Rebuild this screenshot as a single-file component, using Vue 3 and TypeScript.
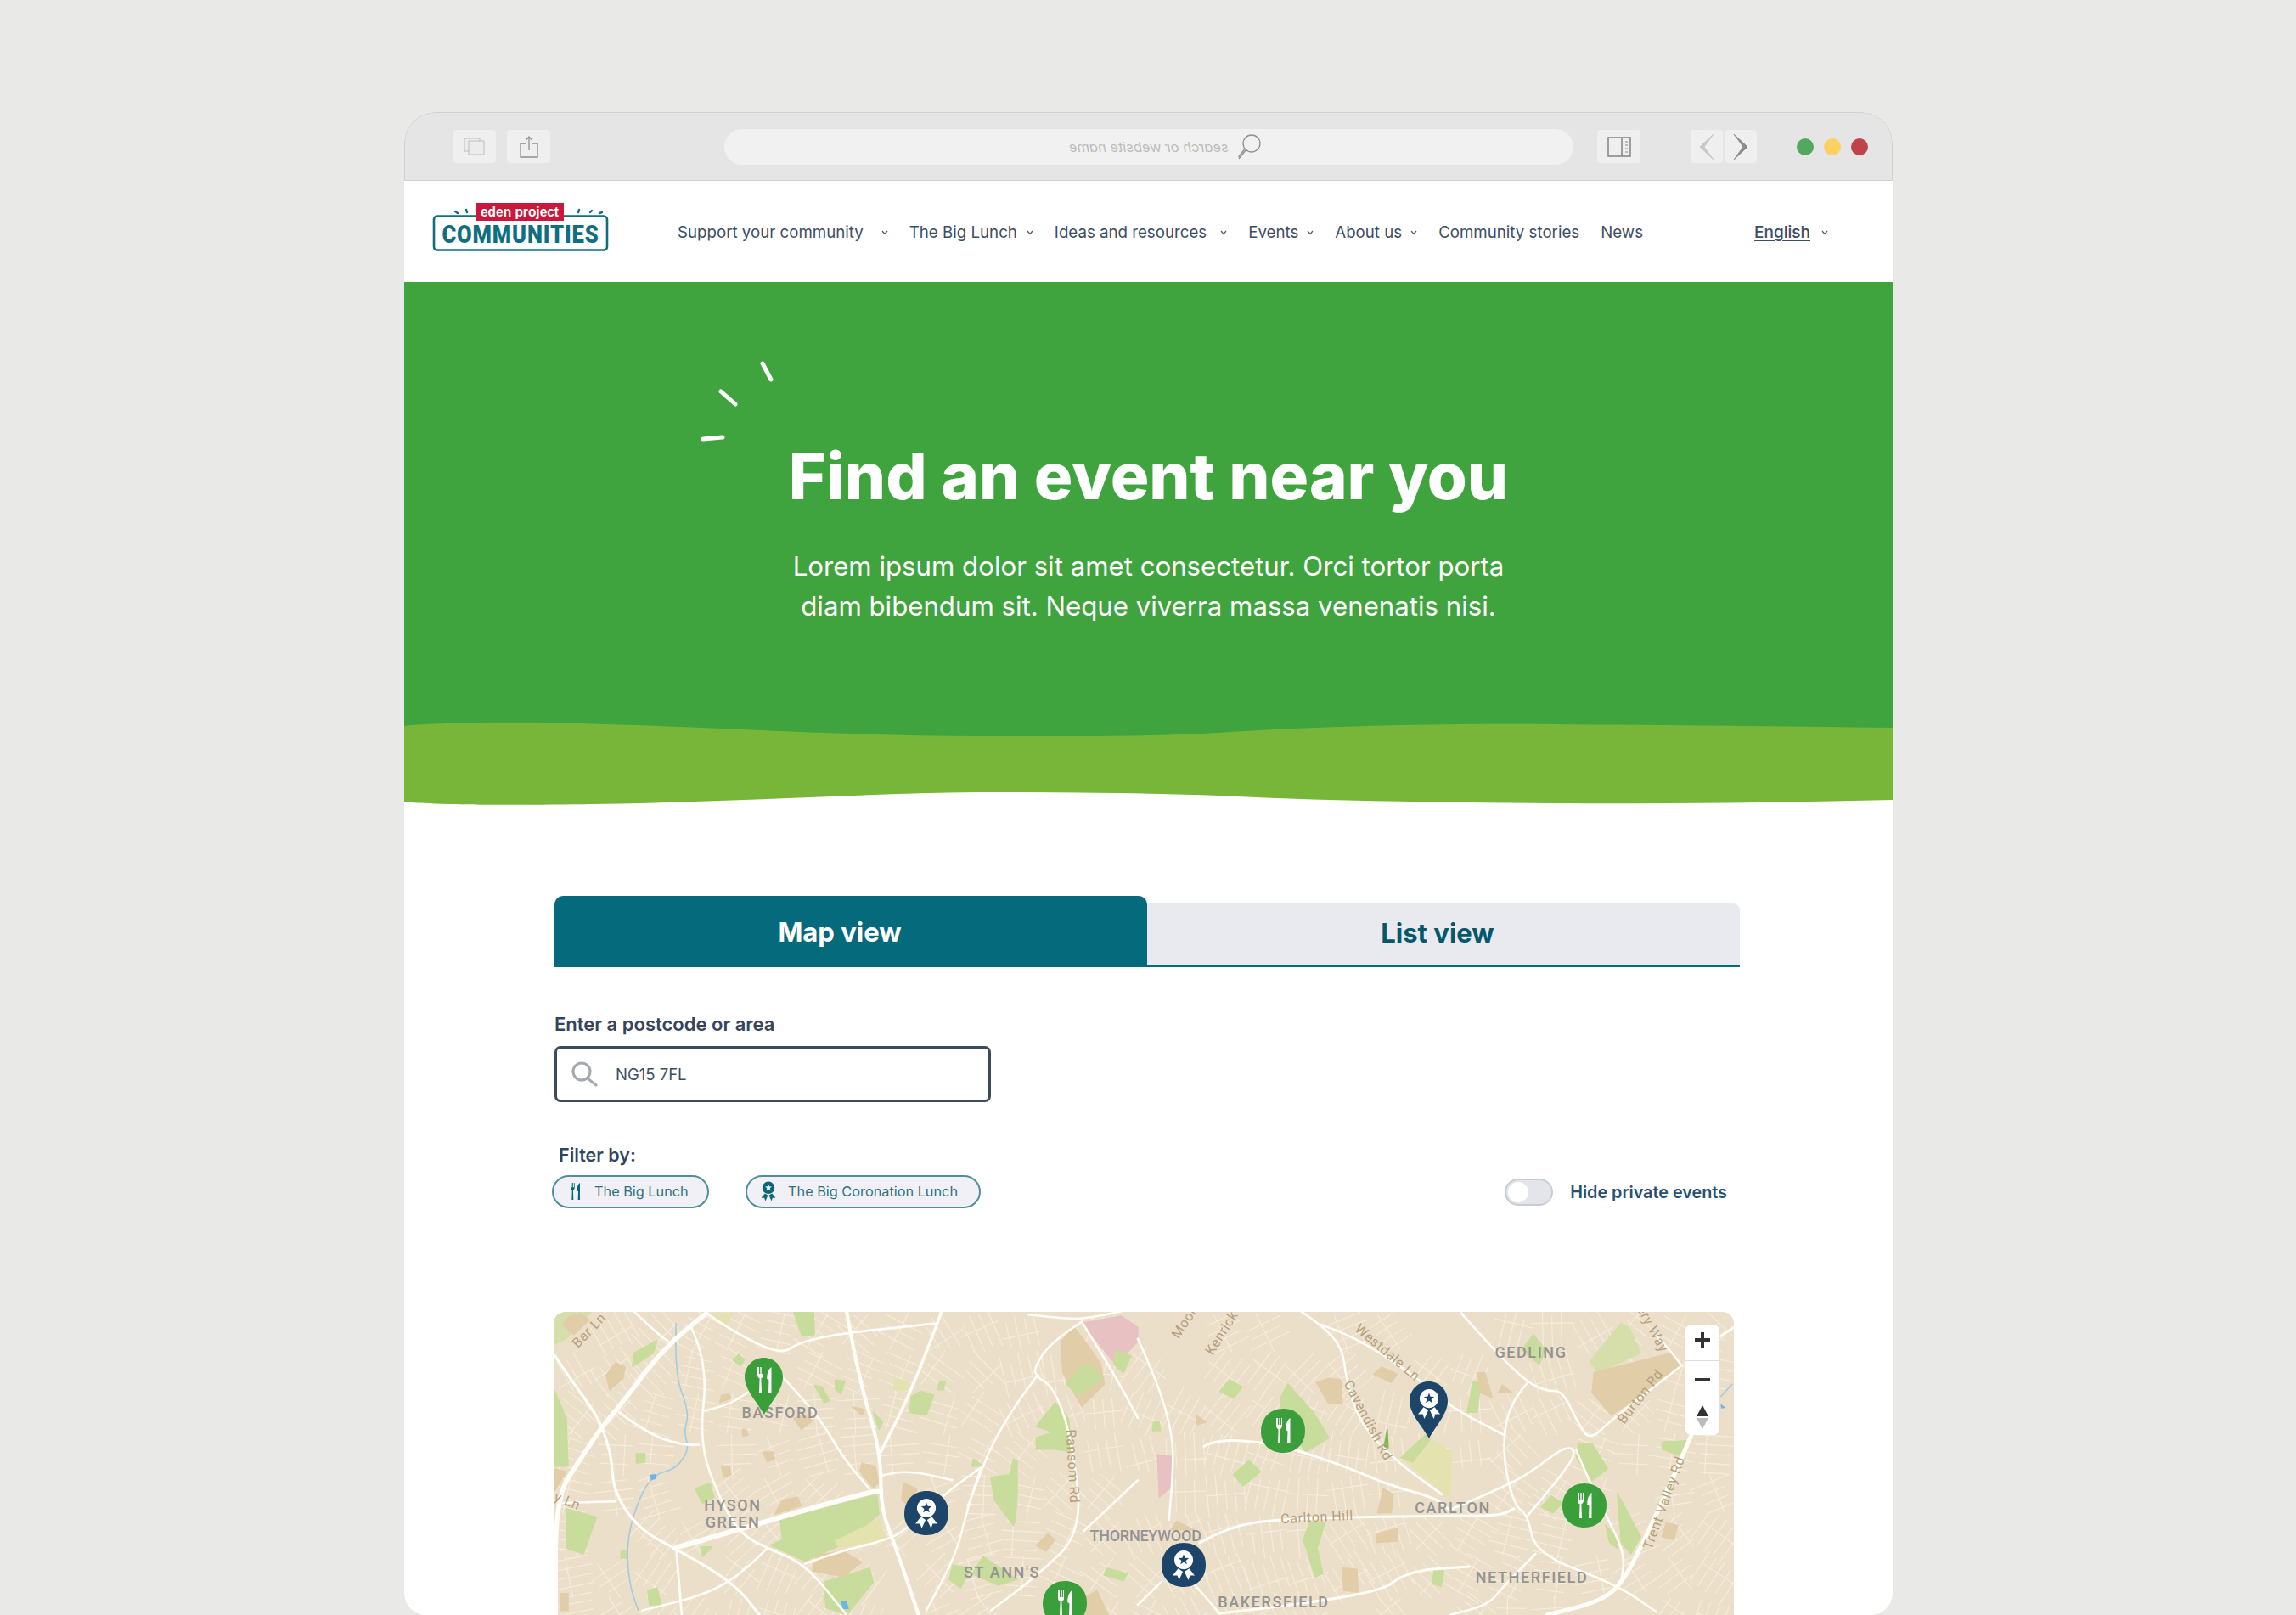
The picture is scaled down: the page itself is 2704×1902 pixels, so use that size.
<script setup lang="ts">
type Shape = { d: string; fill: string }
type Road = { d: string; w: number }

const navItems = [
  { label: 'Support your community', gap: 21, chevron: true },
  { label: 'The Big Lunch', gap: 11, chevron: true },
  { label: 'Ideas and resources', gap: 16, chevron: true },
  { label: 'Events', gap: 10, chevron: true },
  { label: 'About us', gap: 10, chevron: true },
  { label: 'Community stories', gap: 0, chevron: false },
  { label: 'News', gap: 0, chevron: false },
]

const L = (x: number, y: number): [number, number] => [640 + x / 2.24, 1530 + y / 3]
const R = (x: number, y: number): [number, number] => [1340 + x / 2.178, 1530 + y / 3]
type Conv = typeof L

function parse(s: string, c: Conv): [number, number][] {
  return s.trim().split(/\s+/).map((p) => {
    const [x, y] = p.split(',').map(Number)
    return c(x, y)
  })
}
const f = (n: number) => n.toFixed(1)
function openPath(s: string, c: Conv): string {
  const p = parse(s, c)
  let d = `M${f(p[0][0])} ${f(p[0][1])}`
  for (let i = 1; i < p.length - 1; i++) {
    const mx = (p[i][0] + p[i + 1][0]) / 2
    const my = (p[i][1] + p[i + 1][1]) / 2
    d += `Q${f(p[i][0])} ${f(p[i][1])} ${f(mx)} ${f(my)}`
  }
  const e = p[p.length - 1]
  return d + `L${f(e[0])} ${f(e[1])}`
}
function polyPath(s: string, c: Conv): string {
  const p = parse(s, c)
  return 'M' + p.map((q) => `${f(q[0])} ${f(q[1])}`).join('L') + 'Z'
}

const GREEN = '#c8dc9c'
const TAN = '#e1cda8'
const PINK = '#e8c2c2'
const PALE = '#e4e3b0'
const OLIVE = '#d6dfa9'

const shapesL: [string, string][] = [
  ['28,60 28,160 60,140 125,45 60,45', OLIVE],
  ['70,60 50,90 80,125 120,75 100,50', TAN],
  ['300,145 240,190 235,238 290,190', GREEN],
  ['190,225 165,270 175,320 210,280 215,240', TAN],
  ['660,45 682,130 715,125 712,45', GREEN],
  ['445,50 478,98 500,50', PALE],
  ['515,195 500,215 520,235 530,215', GREEN],
  ['28,320 28,590 65,590 60,420', GREEN],
  ['28,600 28,680 60,610', TAN],
  ['715,305 740,365 755,360 735,310', GREEN],
  ['770,285 770,320 785,335 795,290', GREEN],
  ['970,345 965,400 1010,410 1030,340 995,325', GREEN],
  ['925,280 925,320 960,320 960,290', PALE],
  ['1045,290 1040,320 1055,320 1060,290', GREEN],
  ['625,780 630,850 600,870 690,925 800,860 885,760 880,690', GREEN],
  ['770,855 780,880 905,845 885,780', PALE],
  ['1350,365 1300,450 1345,470 1300,490 1300,530 1350,530 1395,540 1385,420', GREEN],
  ['1240,565 1230,620 1180,630 1190,710 1240,800 1245,780 1250,690 1250,570', GREEN],
  ['1420,85 1510,230 1568,150 1568,100 1525,60', PINK],
  ['1400,100 1365,150 1370,260 1420,380 1480,300 1470,230 1440,170', TAN],
  ['1420,235 1380,300 1410,340 1475,280 1450,240', GREEN],
  ['1510,180 1505,230 1530,260 1550,200', GREEN],
  ['400,670 440,650 450,700 420,720', GREEN],
  ['630,710 610,760 680,730 670,700', TAN],
  ['840,580 835,610 870,665 885,650 875,590', TAN],
  ['245,545 245,580 268,575 268,545', GREEN],
  ['60,740 60,880 105,900 140,770', GREEN],
  ['205,890 205,915 220,915 220,890', GREEN],
  ['415,875 420,910 445,875', GREEN],
  ['275,1030 280,1080 310,1080 300,1020', GREEN],
  ['740,1000 745,1090 800,1116 870,1000 860,950', GREEN],
  ['720,905 710,960 790,980 840,930 790,890', TAN],
  ['1080,940 1070,990 1100,1020 1130,950', GREEN],
  ['1160,910 1130,970 1200,1010 1250,990', GREEN],
  ['1330,830 1300,870 1325,890 1350,850', TAN],
  ['1485,950 1480,975 1530,995 1540,970', GREEN],
  ['1420,1060 1420,1116 1490,1116 1460,1030', TAN],
  ['950,650 945,710 975,740 985,670', TAN],
  ['470,340 465,365 495,350 490,335', TAN],
  ['580,540 590,575 610,565 605,540', TAN],
  ['470,590 475,630 495,620 490,590', TAN],
  ['525,460 525,485 540,480 535,460', TAN],
  ['660,420 680,460 710,430 690,410', TAN],
  ['815,380 840,410 848,390', TAN],
  ['870,400 885,460 895,435', GREEN],
  ['1135,565 1130,590 1158,590', GREEN],
  ['45,1040 45,1100 65,1100 65,1040', TAN],
]
const shapesR: [string, string][] = [
  ['1240,85 1160,220 1180,260 1290,190 1260,100', OLIVE],
  ['1370,190 1170,260 1165,330 1215,410 1395,240', TAN],
  ['385,300 365,350 370,400 430,540 490,490 450,400', GREEN],
  ['235,285 210,325 245,350 268,310', GREEN],
  ['285,570 245,620 270,660 315,610', GREEN],
  ['50,550 55,700 90,660 85,555', PINK],
  ['745,490 680,560 710,600 800,700 805,540', PALE],
  ['745,470 675,560 705,575 750,495', GREEN],
  ['1130,510 1125,560 1165,640 1205,600 1165,510', GREEN],
  ['1230,685 1240,860 1265,900 1290,840', GREEN],
  ['1200,800 1210,860 1230,880 1225,830', GREEN],
  ['1060,695 1035,735 1065,755 1090,720', GREEN],
  ['1345,505 1345,530 1395,555 1410,500', GREEN],
  ['440,790 425,850 455,980 475,970 460,880 480,790', GREEN],
  ['760,960 755,1005 778,1015 785,960', GREEN],
  ['490,280 458,295 490,370 525,370 520,285', TAN],
  ['625,240 605,265 650,295 665,265', TAN],
  ['630,670 615,755 650,755 655,690', TAN],
  ['665,810 612,830 612,860 665,855', TAN],
  ['525,950 528,1030 565,1035 562,955', TAN],
  ['1355,790 1345,840 1375,850 1385,800', TAN],
  ['1015,125 985,180 1030,230 1045,180', GREEN],
  ['860,290 845,400 870,400 880,300', GREEN],
  ['870,260 880,330 910,350 890,260', TAN],
  ['935,305 925,330 960,330', TAN],
  ['640,460 632,520 642,525', '#7fb84e'],
  ['40,435 38,465 58,465 55,435', GREEN],
  ['100,785 85,815 145,815', TAN],
  ['150,410 150,445 175,435', TAN],
]

const shapes: Shape[] = [
  ...shapesL.map(([s, c]) => ({ d: polyPath(s, L), fill: c })),
  ...shapesR.map(([s, c]) => ({ d: polyPath(s, R), fill: c })),
]

const roadsL: [string, number][] = [
  ['430,50 330,150 200,380 155,450 100,560 32,700 32,1116', 5.5],
  ['30,200 70,280 125,380 155,450 180,560 185,680 250,810 345,880 450,960 520,1030 570,1116', 3.2],
  ['345,880 510,815 860,680 890,680', 6],
  ['800,45 830,270 890,540 890,740 930,880 990,1116', 4.2],
  ['1050,45 980,300 890,540', 3.6],
  ['390,100 435,230 410,510 470,720 520,830 590,880 690,935 800,1116', 2.6],
  ['590,880 540,950 440,1040 260,1100', 2.6],
  ['690,935 770,895 910,850 960,810 1075,670 1155,595', 2.6],
  ['890,625 950,600 1080,640', 2.6],
  ['430,50 610,215 690,135 1040,85', 2.8],
  ['620,260 720,400 790,560 860,670', 2.6],
  ['200,400 280,480 370,515 410,515', 2.8],
  ['420,395 480,380 545,325', 2.4],
  ['1155,595 1120,730 1090,900 1010,1100', 2.6],
  ['1300,275 1200,450 1120,730', 2.6],
  ['1420,80 1340,150 1295,240 1300,275 1345,310 1390,470 1425,820 1300,980 1180,1100', 2.6],
  ['1425,820 1568,640', 2.6],
  ['1280,55 1370,68 1430,70 1568,30', 2.6],
  ['1420,80 1500,250 1568,420', 2.6],
  ['40,720 190,715', 2.4],
  ['350,880 365,1116', 2.8],
  ['240,45 300,120 330,150', 2.4],
]
const roadsR: [string, number][] = [
  ['0,140 50,290 90,480 90,620 80,780', 2.6],
  ['420,45 470,90 525,170 535,290 570,440 660,570 780,690', 2.6],
  ['470,90 555,130 720,280 800,380 940,480', 2.6],
  ['830,50 920,190 1000,295 1050,325 1090,325 1130,440 1160,500 1220,420 1395,235', 2.6],
  ['1000,295 950,370 935,550 965,730 1000,760 1020,900 1230,1010 1330,1105', 2.6],
  ['170,520 200,495 320,505 400,530 530,590 650,660 760,700 800,745', 3],
  ['160,860 230,805 370,775 780,765 930,765 965,740', 3],
  ['800,745 860,710 950,655 1010,610 1095,520 1125,535 1100,600 1000,765', 2.6],
  ['1125,535 1160,650 1200,760 1250,900 1240,1000', 2.6],
  ['1420,480 1380,610 1300,850 1240,1010 1180,1070 1050,1116', 5],
  ['210,1110 610,1050 690,960 850,945', 3],
  ['1020,900 940,1010 900,1080 800,1116', 2.6],
  ['60,1000 0,1080', 2.6],
  ['140,1000 210,1110', 2.6],
  ['1495,130 1530,100', 2.6],
  ['1395,235 1365,180 1330,130', 2.4],
]
const roads: Road[] = [
  ...roadsL.map(([s, w]) => ({ d: openPath(s, L), w })),
  ...roadsR.map(([s, w]) => ({ d: openPath(s, R), w })),
]

const water = [
  openPath('350,85 345,260 385,400 370,470 385,530 350,600 290,620 250,710 220,850 225,1000 250,1100', L),
  openPath('1495,345 1525,300', R),
]
const ponds = [
  polyPath('280,620 284,640 296,636 298,618', L),
  polyPath('785,1068 790,1095 806,1095 800,1066', L),
  polyPath('1495,370 1496,386 1508,384', R),
]

// Fine street texture: short parallel streets whose direction drifts across the map
function streets(): string {
  let seed = 4711
  const rnd = () => {
    seed = (seed * 16807) % 2147483647
    return seed / 2147483647
  }
  let d = ''
  const size = 48
  for (let y = 1545; y < 1902; y += size) {
    for (let x = 652; x < 2042; x += size) {
      const skip = rnd()
      const a = 0.5 + 1.1 * Math.sin(x / 190) + 0.8 * Math.cos(y / 120) + rnd() * 0.5
      if (skip < 0.14) continue
      const ca = Math.cos(a)
      const sa = Math.sin(a)
      const cx = x + size / 2
      const cy = y + size / 2
      const n = 3 + Math.floor(rnd() * 3)
      for (let i = 0; i < n; i++) {
        const off = (i - (n - 1) / 2) * 11
        const len = 14 + rnd() * 12
        const x1 = cx - sa * off - ca * len
        const y1 = cy + ca * off - sa * len
        const x2 = cx - sa * off + ca * len
        const y2 = cy + ca * off + sa * len
        d += `M${f(x1)} ${f(y1)}L${f(x2)} ${f(y2)}`
      }
      const s = (rnd() - 0.5) * 24
      d += `M${f(cx + ca * s - sa * 24)} ${f(cy + sa * s + ca * 24)}L${f(cx + ca * s + sa * 24)} ${f(cy + sa * s - ca * 24)}`
    }
  }
  return d
}
const streetPath = streets()

const places: { t: string; x: number; y: number; len?: number }[] = [
  { t: 'BASFORD', x: 919, y: 1670 },
  { t: 'HYSON', x: 863, y: 1779 },
  { t: 'GREEN', x: 863, y: 1799 },
  { t: "ST ANN'S", x: 1180, y: 1858 },
  { t: 'THORNEYWOOD', x: 1350, y: 1815, len: 133 },
  { t: 'GEDLING', x: 1803, y: 1599 },
  { t: 'CARLTON', x: 1711, y: 1782 },
  { t: 'NETHERFIELD', x: 1804, y: 1864 },
  { t: 'BAKERSFIELD', x: 1500, y: 1893 },
]
const roadLabels = [
  { t: 'Bar Ln', x: 694, y: 1567, r: -46 },
  { t: 'Ransom Rd', x: 1263, y: 1727, r: 87 },
  { t: 'y Ln', x: 668, y: 1768, r: 22 },
  { t: 'Moor', x: 1395, y: 1558, r: -56 },
  { t: 'Kenrick', x: 1439, y: 1570, r: -58 },
  { t: 'Westdale Ln', x: 1634, y: 1593, r: 40 },
  { t: 'Cavendish Rd', x: 1611, y: 1673, r: 62 },
  { t: 'Carlton Hill', x: 1551, y: 1787, r: -3 },
  { t: 'Burton Rd', x: 1932, y: 1645, r: -52 },
  { t: 'Trent Valley Rd', x: 1960, y: 1770, r: -70 },
  { t: 'ery Way', x: 1946, y: 1565, r: 62 },
]

const pins = [
  { kind: 'pin', icon: 'fork', fill: '#3a9f3a', x: 877, y: 1599 },
  { kind: 'blob', icon: 'rosette', fill: '#1d456a', x: 1065, y: 1756 },
  { kind: 'blob', icon: 'fork', fill: '#3a9f3a', x: 1228, y: 1862 },
  { kind: 'pin', icon: 'rosette', fill: '#1d456a', x: 1660, y: 1627 },
  { kind: 'blob', icon: 'fork', fill: '#3a9f3a', x: 1485, y: 1659 },
  { kind: 'blob', icon: 'fork', fill: '#3a9f3a', x: 1840, y: 1747 },
  { kind: 'blob', icon: 'rosette', fill: '#1d456a', x: 1368, y: 1817 },
]
const PIN_D = 'M22.5 0C35 0 45 10 45 23C45 38 30 54 23 67C16 54 0 38 0 23C0 10 10 0 22.5 0Z'
const BLOB_D = 'M26 0C42 0 52 11 52 26C52 41 42 52 26 52C11 52 0 42 0 27C0 11 11 0 26 0Z'
</script>

<template>
  <div class="page">
    <div class="window">
      <header class="toolbar">
        <div class="tool-btn first">
          <svg width="25" height="21" viewBox="0 0 25 21" fill="#ececec" stroke="#bdbdbd" stroke-width="1">
            <rect x="1" y="1" width="18" height="15" />
            <rect x="6" y="4" width="18" height="16" />
          </svg>
        </div>
        <div class="tool-btn second">
          <svg width="22" height="26" viewBox="0 0 22 26" fill="none" stroke="#8f8f8f" stroke-width="1.3">
            <path d="M7 9H1V25H21V9H15" />
            <path d="M11 17V1M7.5 5L11 1L14.5 5" />
          </svg>
        </div>
        <div class="address">
          <span class="mirror">search or website name</span>
          <svg class="glass" width="28" height="30" viewBox="0 0 28 30" fill="none" stroke="#8f8f8f" stroke-width="1.3">
            <circle cx="16" cy="11" r="10" />
            <path d="M9 19L1 29M7.5 18L0.5 27" />
          </svg>
        </div>
        <div class="tool-btn sidebar">
          <svg width="28" height="24" viewBox="0 0 28 24" fill="none" stroke="#8a8a8a" stroke-width="1.6">
            <rect x="1" y="1" width="26" height="22" />
            <path d="M17 1V23" />
            <path d="M21 6H24M21 10H24M21 14H24M21 18H24" stroke-width="1" />
          </svg>
        </div>
        <div class="arrows">
          <div class="tool-btn arrow">
            <svg width="20" height="32" viewBox="0 0 20 32"><path d="M18 1L2 16L18 31L7 16Z" fill="#c9c9c9" stroke="#c9c9c9" /></svg>
          </div>
          <div class="tool-btn arrow">
            <svg width="20" height="32" viewBox="0 0 20 32"><path d="M2 1L18 16L2 31L13 16Z" fill="#8d8d8d" stroke="#8d8d8d" /></svg>
          </div>
        </div>
        <div class="lights">
          <span class="light l-green"></span>
          <span class="light l-yellow"></span>
          <span class="light l-red"></span>
        </div>
      </header>

      <nav class="nav">
        <svg class="logo" width="208" height="58" viewBox="0 0 208 58">
          <g stroke="#0f6f80" stroke-width="2.4" stroke-linecap="round">
            <path d="M27 10L30 12M40 8L41 11M52 7L52 10M172 11L173 8M186 11L188 9M197 12L200 11" />
          </g>
          <rect x="2" y="15.5" width="204" height="40" rx="4" fill="#fff" stroke="#0f6f80" stroke-width="2.6" />
          <rect x="51" y="0" width="104" height="21" fill="#c8193c" />
          <text x="103" y="15.5" class="logo-top" text-anchor="middle" textLength="92" lengthAdjust="spacingAndGlyphs">eden project</text>
          <text x="104" y="47" class="logo-main" text-anchor="middle" textLength="185" lengthAdjust="spacingAndGlyphs">COMMUNITIES</text>
        </svg>
        <ul class="menu">
          <li v-for="item in navItems" :key="item.label" class="menu-item">
            <span>{{ item.label }}</span>
            <svg
              v-if="item.chevron"
              class="chev"
              :style="{ marginLeft: item.gap + 'px' }"
              width="8"
              height="6"
              viewBox="0 0 8 6"
              fill="none"
              stroke="#4a5a70"
              stroke-width="1.2"
            ><path d="M1 1L4 4.5L7 1" /></svg>
          </li>
        </ul>
        <div class="lang">
          <span class="lang-text">English</span>
          <svg class="chev lang-chev" width="8" height="6" viewBox="0 0 8 6" fill="none" stroke="#4a5a70" stroke-width="1.2"><path d="M1 1L4 4.5L7 1" /></svg>
        </div>
      </nav>

      <section class="hero">
        <svg class="sparks" width="90" height="100" viewBox="0 0 90 100" fill="none" stroke="#fff" stroke-width="5" stroke-linecap="round">
          <path d="M73 5L83 24M24 38L41 53M3 94L26 92" />
        </svg>
        <h1>Find an event near you</h1>
        <p>Lorem ipsum dolor sit amet consectetur. Orci tortor porta<br />diam bibendum sit. Neque viverra massa venenatis nisi.</p>
      </section>
      <svg class="wave" width="1753" height="112" viewBox="476 840 1753 112" preserveAspectRatio="none">
        <rect x="476" y="840" width="1753" height="112" fill="#fff" />
        <rect x="476" y="840" width="1753" height="40" fill="#3fa43e" />
        <path
          fill="#78b639"
          d="M476 855C520 850 640 850 697 852.5C850 856 1000 867 1151 867C1250 867 1350 868 1435 863C1550 855 1700 852 1832 853C1950 854 2100 855 2229 857L2229 942C2100 945 1950 947 1832 946C1700 945 1550 943 1435 937C1350 934 1250 933 1151 933C1000 935 850 945 697 947C640 948 550 948 530 947C510 946 490 946 476 944Z"
        />
      </svg>

      <main class="content">
        <div class="tabs">
          <button class="tab tab-active" type="button">Map view</button>
          <button class="tab tab-idle" type="button">List view</button>
        </div>

        <label class="field-label">Enter a postcode or area</label>
        <div class="search">
          <svg width="32" height="30" viewBox="0 0 32 30" fill="none" stroke="#a5a8af" stroke-width="3">
            <circle cx="12" cy="12" r="10" />
            <path d="M19 20L29 28" stroke-linecap="round" />
          </svg>
          <span>NG15 7FL</span>
        </div>

        <div class="filter-label">Filter by:</div>
        <div class="filter-row">
          <div class="chip chip-a">
            <svg class="chip-ico" width="16" height="22" viewBox="0 0 24 32"><use href="#ico-fork" /></svg>
            The Big Lunch
          </div>
          <div class="chip chip-b">
            <svg class="chip-ico" width="20" height="24" viewBox="0 0 32 40"><use href="#ico-rosette" /></svg>
            The Big Coronation Lunch
          </div>
          <div class="toggle-wrap">
            <span class="toggle"><span class="knob"></span></span>
            <span class="toggle-text">Hide private events</span>
          </div>
        </div>

        <div class="map">
          <svg class="map-svg" width="1390" height="357" viewBox="652 1545 1390 357">
            <defs>
              <symbol id="ico-fork" viewBox="0 0 24 32">
                <path fill="currentColor" d="M3 1V10C3 12.5 4.2 13.6 5.6 14.2L5 31H8L7.4 14.2C8.8 13.6 10 12.5 10 10V1H9V9H7.7V1H6.3V9H5V1ZM16 31H19.5V1C16.5 3 14 8 14.3 15L16.5 16.5Z" />
              </symbol>
              <symbol id="ico-rosette" viewBox="0 0 32 40">
                <path fill="currentColor" fill-rule="evenodd" d="M16 1A12 12 0 1 0 16.01 1ZM16 6L17.76 10.57L22.66 10.84L18.85 13.93L20.11 18.66L16 16L11.89 18.66L13.15 13.93L9.34 10.84L14.24 10.57Z" />
                <path fill="currentColor" d="M9 24L2 33L8 33L10 39L15 28ZM23 24L30 33L24 33L22 39L17 28Z" />
              </symbol>
            </defs>
            <rect x="652" y="1545" width="1390" height="357" fill="#ecdfc9" />
            <path :d="streetPath" fill="none" stroke="#f5eddd" stroke-width="1.1" stroke-linecap="round" />
            <path v-for="(s, i) in shapes" :key="'s' + i" :d="s.d" :fill="s.fill" :stroke="s.fill" stroke-linejoin="round" stroke-width="1.5" />
            <path v-for="(d, i) in water" :key="'w' + i" :d="d" fill="none" stroke="#a3cbdf" stroke-width="1.6" />
            <path v-for="(d, i) in ponds" :key="'p' + i" :d="d" fill="#6db5e8" />
            <path
              v-for="(r, i) in roads"
              :key="'r' + i"
              :d="r.d"
              fill="none"
              stroke="#fffdf8"
              :stroke-width="r.w"
              stroke-linecap="round"
              stroke-linejoin="round"
            />
            <text
              v-for="l in roadLabels"
              :key="l.t"
              class="road-label"
              text-anchor="middle"
              :transform="`translate(${l.x} ${l.y}) rotate(${l.r})`"
              dy="5"
            >{{ l.t }}</text>
            <text
              v-for="p in places"
              :key="p.t"
              class="place"
              :x="p.x"
              :y="p.y"
              text-anchor="middle"
              :textLength="p.len"
            >{{ p.t }}</text>
            <g v-for="(p, i) in pins" :key="'pin' + i" :transform="`translate(${p.x} ${p.y})`" :color="'#fff'">
              <path :d="p.kind === 'pin' ? PIN_D : BLOB_D" :fill="p.fill" />
              <svg v-if="p.icon === 'fork'" :x="p.kind === 'pin' ? 12 : 15" :y="p.kind === 'pin' ? 10 : 10" width="24" height="32" viewBox="0 0 24 32"><use href="#ico-fork" /></svg>
              <svg v-else :x="p.kind === 'pin' ? 8 : 11" :y="p.kind === 'pin' ? 8 : 8" width="30" height="37" viewBox="0 0 32 40"><use href="#ico-rosette" /></svg>
            </g>
          </svg>
          <div class="controls">
            <button class="ctrl ctrl-top" type="button">
              <svg width="20" height="20" viewBox="0 0 20 20"><path d="M10 1V19M1 10H19" stroke="#333" stroke-width="4" /></svg>
            </button>
            <button class="ctrl ctrl-mid" type="button">
              <svg width="20" height="6" viewBox="0 0 20 6"><path d="M1 3H19" stroke="#333" stroke-width="4" /></svg>
            </button>
            <button class="ctrl ctrl-end" type="button">
              <svg width="16" height="30" viewBox="0 0 16 30"><path d="M8 1L15 14H1Z" fill="#333" /><path d="M8 29L15 16H1Z" fill="#bbb" /></svg>
            </button>
          </div>
        </div>
      </main>
    </div>
  </div>
</template>

<style>
html, body { margin: 0; padding: 0; background: #e9e9e7; }
</style>

<style scoped>
.page {
  width: 2704px;
  height: 1902px;
  box-sizing: border-box;
  padding: 132px 475px 0 476px;
  overflow: hidden;
  background: #e9e9e7;
  font-family: Inter, "Liberation Sans", sans-serif;
}
.window {
  width: 1753px;
  height: 1770px;
  background: #fff;
  border-radius: 36px 36px 26px 26px;
  overflow: hidden;
}
.toolbar {
  height: 81px;
  box-sizing: border-box;
  background: #e5e5e5;
  border: 1px solid #cfcfcf;
  border-radius: 36px 36px 0 0;
  display: flex;
  align-items: center;
  padding-left: 56px;
}
.tool-btn {
  width: 51px;
  height: 39px;
  background: #efefef;
  border-radius: 4px;
  display: flex;
  align-items: center;
  justify-content: center;
}
.second { margin-left: 13px; }
.address {
  margin-left: 205px;
  width: 1000px;
  height: 42px;
  border-radius: 21px;
  background: #f1f1f1;
  display: flex;
  align-items: center;
  padding-left: 406px;
  box-sizing: border-box;
  gap: 11px;
}
.mirror {
  transform: scaleX(-1);
  font-size: 16.5px;
  color: #bcbcbc;
  white-space: nowrap;
  font-style: italic;
}
.sidebar { margin-left: 28px; }
.arrows { margin-left: 59px; display: flex; gap: 2px; }
.arrow { width: 38px; }
.lights { margin-left: 47px; display: flex; gap: 12px; }
.light { width: 20px; height: 20px; border-radius: 50%; }
.l-green { background: #52a85e; }
.l-yellow { background: #fbd161; }
.l-red { background: #bf4449; }

.nav {
  height: 119px;
  box-sizing: border-box;
  padding: 0 76px 0 33px;
  display: flex;
  align-items: center;
}
.logo { flex: none; margin-top: -9px; }
.logo-top { font: 700 17px "Liberation Sans", sans-serif; fill: #fff; }
.logo-main { font: 900 29px "Roboto", sans-serif; fill: #0f6f80; letter-spacing: 1px; }
.menu {
  list-style: none;
  margin: 2px 0 0 81px;
  padding: 0;
  display: flex;
  gap: 25px;
}
.menu-item {
  display: flex;
  align-items: center;
  font-size: 18.7px;
  line-height: 24px;
  color: #3d4d64;
  white-space: nowrap;
}
.lang {
  margin: 2px 0 0 auto;
  display: flex;
  align-items: center;
  font-size: 19px;
  font-weight: 500;
  color: #3d4d64;
}
.lang-text { text-decoration: underline; text-underline-offset: 3px; }
.lang-chev { margin-left: 13px; }

.hero {
  position: relative;
  background: #3fa43e;
  color: #fff;
  text-align: center;
  padding: 186px 0 102px;
}
.sparks { position: absolute; left: 349px; top: 91px; }
.hero h1 {
  margin: 0;
  font-size: 76px;
  line-height: 84px;
  font-weight: 800;
}
.hero p {
  margin: 42px 0 0;
  font-size: 31.2px;
  line-height: 47px;
  font-weight: 400;
}
.wave { display: block; }

.content {
  padding: 103px 180px 0 177px;
}
.tabs {
  display: flex;
  align-items: flex-end;
  border-bottom: 3px solid #056a7c;
}
.tab {
  width: 698px;
  border: 0;
  font-family: inherit;
  font-size: 31px;
  font-weight: 700;
}
.tab-active {
  height: 81px;
  padding: 4px 26px 0 0;
  background: #056a7c;
  color: #fff;
  border-radius: 10px 10px 0 0;
}
.tab-idle {
  height: 72px;
  padding: 0 14px 3px 0;
  background: #e9eaef;
  color: #05586a;
  border-radius: 0 8px 0 0;
}
.field-label {
  display: block;
  margin-top: 55px;
  font-size: 22px;
  line-height: 24px;
  font-weight: 600;
  color: #33445c;
}
.search {
  margin-top: 14px;
  width: 514px;
  height: 66px;
  box-sizing: border-box;
  border: 3px solid #3b4a5c;
  border-radius: 7px;
  display: flex;
  align-items: center;
  padding-left: 17px;
  gap: 20px;
  font-size: 18.5px;
  color: #3d4d64;
}
.filter-label {
  margin: 50px 0 0 5px;
  font-size: 21.5px;
  line-height: 24px;
  font-weight: 600;
  color: #33445c;
}
.filter-row {
  margin: 12px 0 0 -3px;
  display: flex;
  align-items: center;
}
.chip {
  height: 39px;
  box-sizing: border-box;
  border: 2px solid #4f8f9c;
  border-radius: 20px;
  background: #f0f0f6;
  color: #32707f;
  font-size: 16.3px;
  display: flex;
  align-items: center;
  white-space: nowrap;
  padding-bottom: 2px;
}
.chip-ico { color: #0a6676; flex: none; }
.chip-a { width: 185px; padding-left: 18px; gap: 14px; }
.chip-b { width: 277px; margin-left: 43px; padding-left: 15px; gap: 13px; }
.toggle-wrap {
  margin-left: auto;
  margin-right: 15px;
  display: flex;
  align-items: center;
  gap: 20px;
}
.toggle {
  position: relative;
  display: block;
  width: 57px;
  height: 32px;
  box-sizing: border-box;
  border: 2px solid #c7ccd4;
  background: #e3e5ea;
  border-radius: 16px;
}
.knob {
  position: absolute;
  left: 2px;
  top: 2px;
  width: 24px;
  height: 24px;
  border-radius: 50%;
  background: #fff;
}
.toggle-text {
  font-size: 19.8px;
  font-weight: 600;
  color: #28506f;
  white-space: nowrap;
}
.map {
  position: relative;
  margin: 122px 0 0 -1px;
  width: 1390px;
  height: 357px;
  border-radius: 14px 14px 0 0;
  overflow: hidden;
}
.map-svg { display: block; }
.place {
  font: 500 18px "Roboto", sans-serif;
  letter-spacing: 1.6px;
  fill: #939392;
}
.road-label {
  font: 400 16px "Roboto", sans-serif;
  letter-spacing: 0.6px;
  fill: #b59f80;
}
.controls {
  position: absolute;
  left: 1333px;
  top: 15px;
  width: 40px;
  height: 130px;
  background: #fff;
  border-radius: 7px;
  display: flex;
  flex-direction: column;
}
.ctrl {
  border: 0;
  padding: 0;
  background: none;
  display: flex;
  align-items: center;
  justify-content: center;
}
.ctrl-top { height: 42px; padding-bottom: 6px; }
.ctrl-mid {
  height: 45px;
  border-top: 1px solid #ddd;
  border-bottom: 1px solid #ddd;
}
.ctrl-end { height: 43px; }
</style>
